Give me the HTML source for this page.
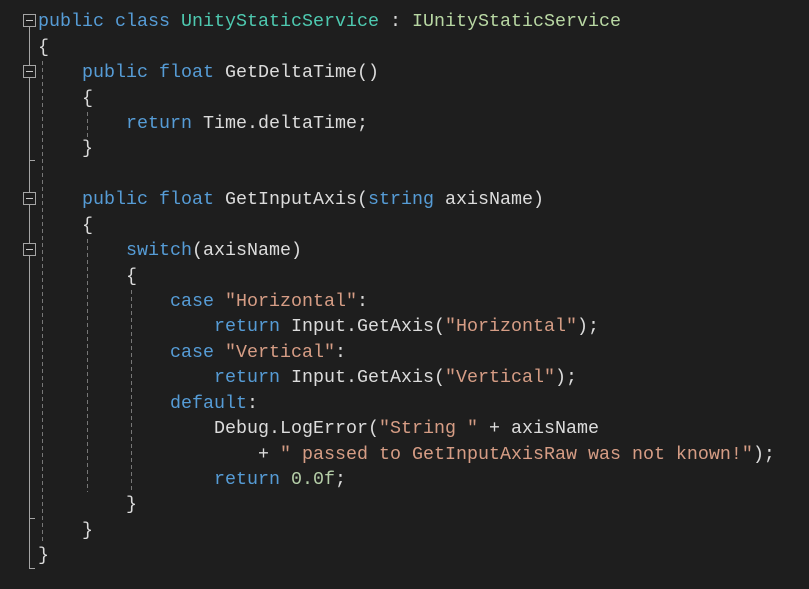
<!DOCTYPE html>
<html><head><style>
body{margin:0;width:809px;height:589px;background:#1e1e1e;overflow:hidden;position:relative;font-family:"Liberation Mono",monospace;font-size:18.33px;color:#dcdcdc}
.l{position:absolute;left:38px;height:25.4px;line-height:25.4px;white-space:pre}
.k{color:#569cd6}.t{color:#4ec9b0}.i{color:#b8d7a3}.s{color:#d69d85}.n{color:#b5cea8}
.g{position:absolute;width:1px;background:repeating-linear-gradient(to bottom,#777 0 4px,transparent 4px 7px)}
.v{position:absolute;background:#a5a5a5}
.b{position:absolute;left:23px;width:11px;height:11px;border:1px solid #a5a5a5;background:#1e1e1e}
.b:after{content:"";position:absolute;left:2px;top:5px;width:7px;height:1px;background:#c8c8c8}
</style></head><body>
<div class="v" style="left:29px;top:27px;width:1px;height:542px"></div>
<div class="v" style="left:29px;top:160px;width:6px;height:1px"></div>
<div class="v" style="left:29px;top:518px;width:6px;height:1px"></div>
<div class="v" style="left:29px;top:568px;width:6px;height:1px"></div>
<div class="b" style="top:14px"></div>
<div class="b" style="top:65px"></div>
<div class="b" style="top:192px"></div>
<div class="b" style="top:243px"></div>
<div class="g" style="left:42px;top:61px;height:482px"></div>
<div class="g" style="left:87px;top:112px;height:28px"></div>
<div class="g" style="left:87px;top:239px;height:253px"></div>
<div class="g" style="left:131px;top:290px;height:202px"></div>

<div class="l" style="top:9px"><span class="k">public</span> <span class="k">class</span> <span class="t">UnityStaticService</span> : <span class="i">IUnityStaticService</span></div>
<div class="l" style="top:35px">{</div>
<div class="l" style="top:60px">    <span class="k">public</span> <span class="k">float</span> GetDeltaTime()</div>
<div class="l" style="top:86px">    {</div>
<div class="l" style="top:111px">        <span class="k">return</span> Time.deltaTime;</div>
<div class="l" style="top:136px">    }</div>
<div class="l" style="top:187px">    <span class="k">public</span> <span class="k">float</span> GetInputAxis(<span class="k">string</span> axisName)</div>
<div class="l" style="top:213px">    {</div>
<div class="l" style="top:238px">        <span class="k">switch</span>(axisName)</div>
<div class="l" style="top:264px">        {</div>
<div class="l" style="top:289px">            <span class="k">case</span> <span class="s">"Horizontal"</span>:</div>
<div class="l" style="top:314px">                <span class="k">return</span> Input.GetAxis(<span class="s">"Horizontal"</span>);</div>
<div class="l" style="top:340px">            <span class="k">case</span> <span class="s">"Vertical"</span>:</div>
<div class="l" style="top:365px">                <span class="k">return</span> Input.GetAxis(<span class="s">"Vertical"</span>);</div>
<div class="l" style="top:391px">            <span class="k">default</span>:</div>
<div class="l" style="top:416px">                Debug.LogError(<span class="s">"String "</span> + axisName</div>
<div class="l" style="top:442px">                    + <span class="s">" passed to GetInputAxisRaw was not known!"</span>);</div>
<div class="l" style="top:467px">                <span class="k">return</span> <span class="n">0.0f</span>;</div>
<div class="l" style="top:492px">        }</div>
<div class="l" style="top:518px">    }</div>
<div class="l" style="top:543px">}</div>
</body></html>
